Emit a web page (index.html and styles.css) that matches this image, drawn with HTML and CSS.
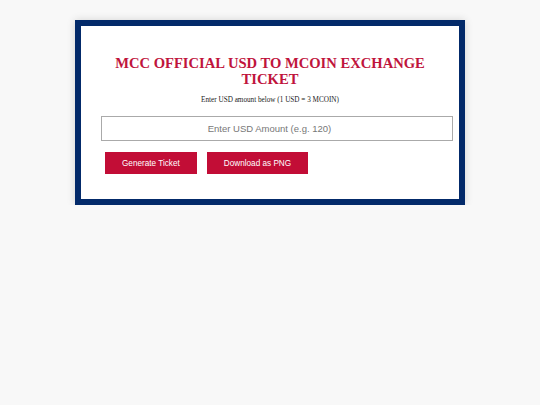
FILE: index.html
```html
<!DOCTYPE html>
<html>
<head>
  <title>MCC Exchange Ticket</title>
  <link rel="stylesheet" href="styles.css">
</head>
<body>
  <div class="ticket">
    <h1>MCC OFFICIAL USD TO MCOIN EXCHANGE TICKET</h1>
    <p class="note">Enter USD amount below (1 USD = 3 MCOIN)</p>
    <input type="number" id="amount" placeholder="Enter USD Amount (e.g. 120)">
    <div class="actions">
      <button class="btn">Generate Ticket</button>
      <button class="btn">Download as PNG</button>
    </div>
  </div>
</body>
</html>
```

FILE: styles.css
```css
body {
  margin: 0;
  background-color: #f8f8f8;
  font-family: "Liberation Serif", Georgia, serif;
}

.ticket {
  width: 338px;
  margin: 20px auto 0;
  padding: 20px 20px 25px;
  background-color: #ffffff;
  border: 6px solid #032a6a;
  box-shadow: 0 0 8px rgba(0, 0, 0, 0.15);
  text-align: center;
}

h1 {
  margin: 9px 0 0;
  font-size: 14.6px;
  line-height: 16px;
  color: #c0143c;
}

.note {
  margin: 9px 0 11px;
  font-size: 7.2px;
  line-height: 9px;
  color: #222;
}

#amount {
  width: 100%;
  height: 23px;
  padding: 0 6px;
  border: 1px solid #aaa;
  font-family: "Liberation Sans", Arial, sans-serif;
  font-size: 9.5px;
  text-align: center;
  box-sizing: content-box;
  display: block;
}

#amount::placeholder {
  color: #777;
}

.actions {
  display: flex;
  margin-top: 11px;
  padding-left: 4px;
  gap: 10px;
}

.btn {
  height: 22px;
  padding: 0 17px;
  border: none;
  background-color: #c20d36;
  color: #fff;
  font-family: "Liberation Sans", Arial, sans-serif;
  font-size: 8.2px;
}
```
